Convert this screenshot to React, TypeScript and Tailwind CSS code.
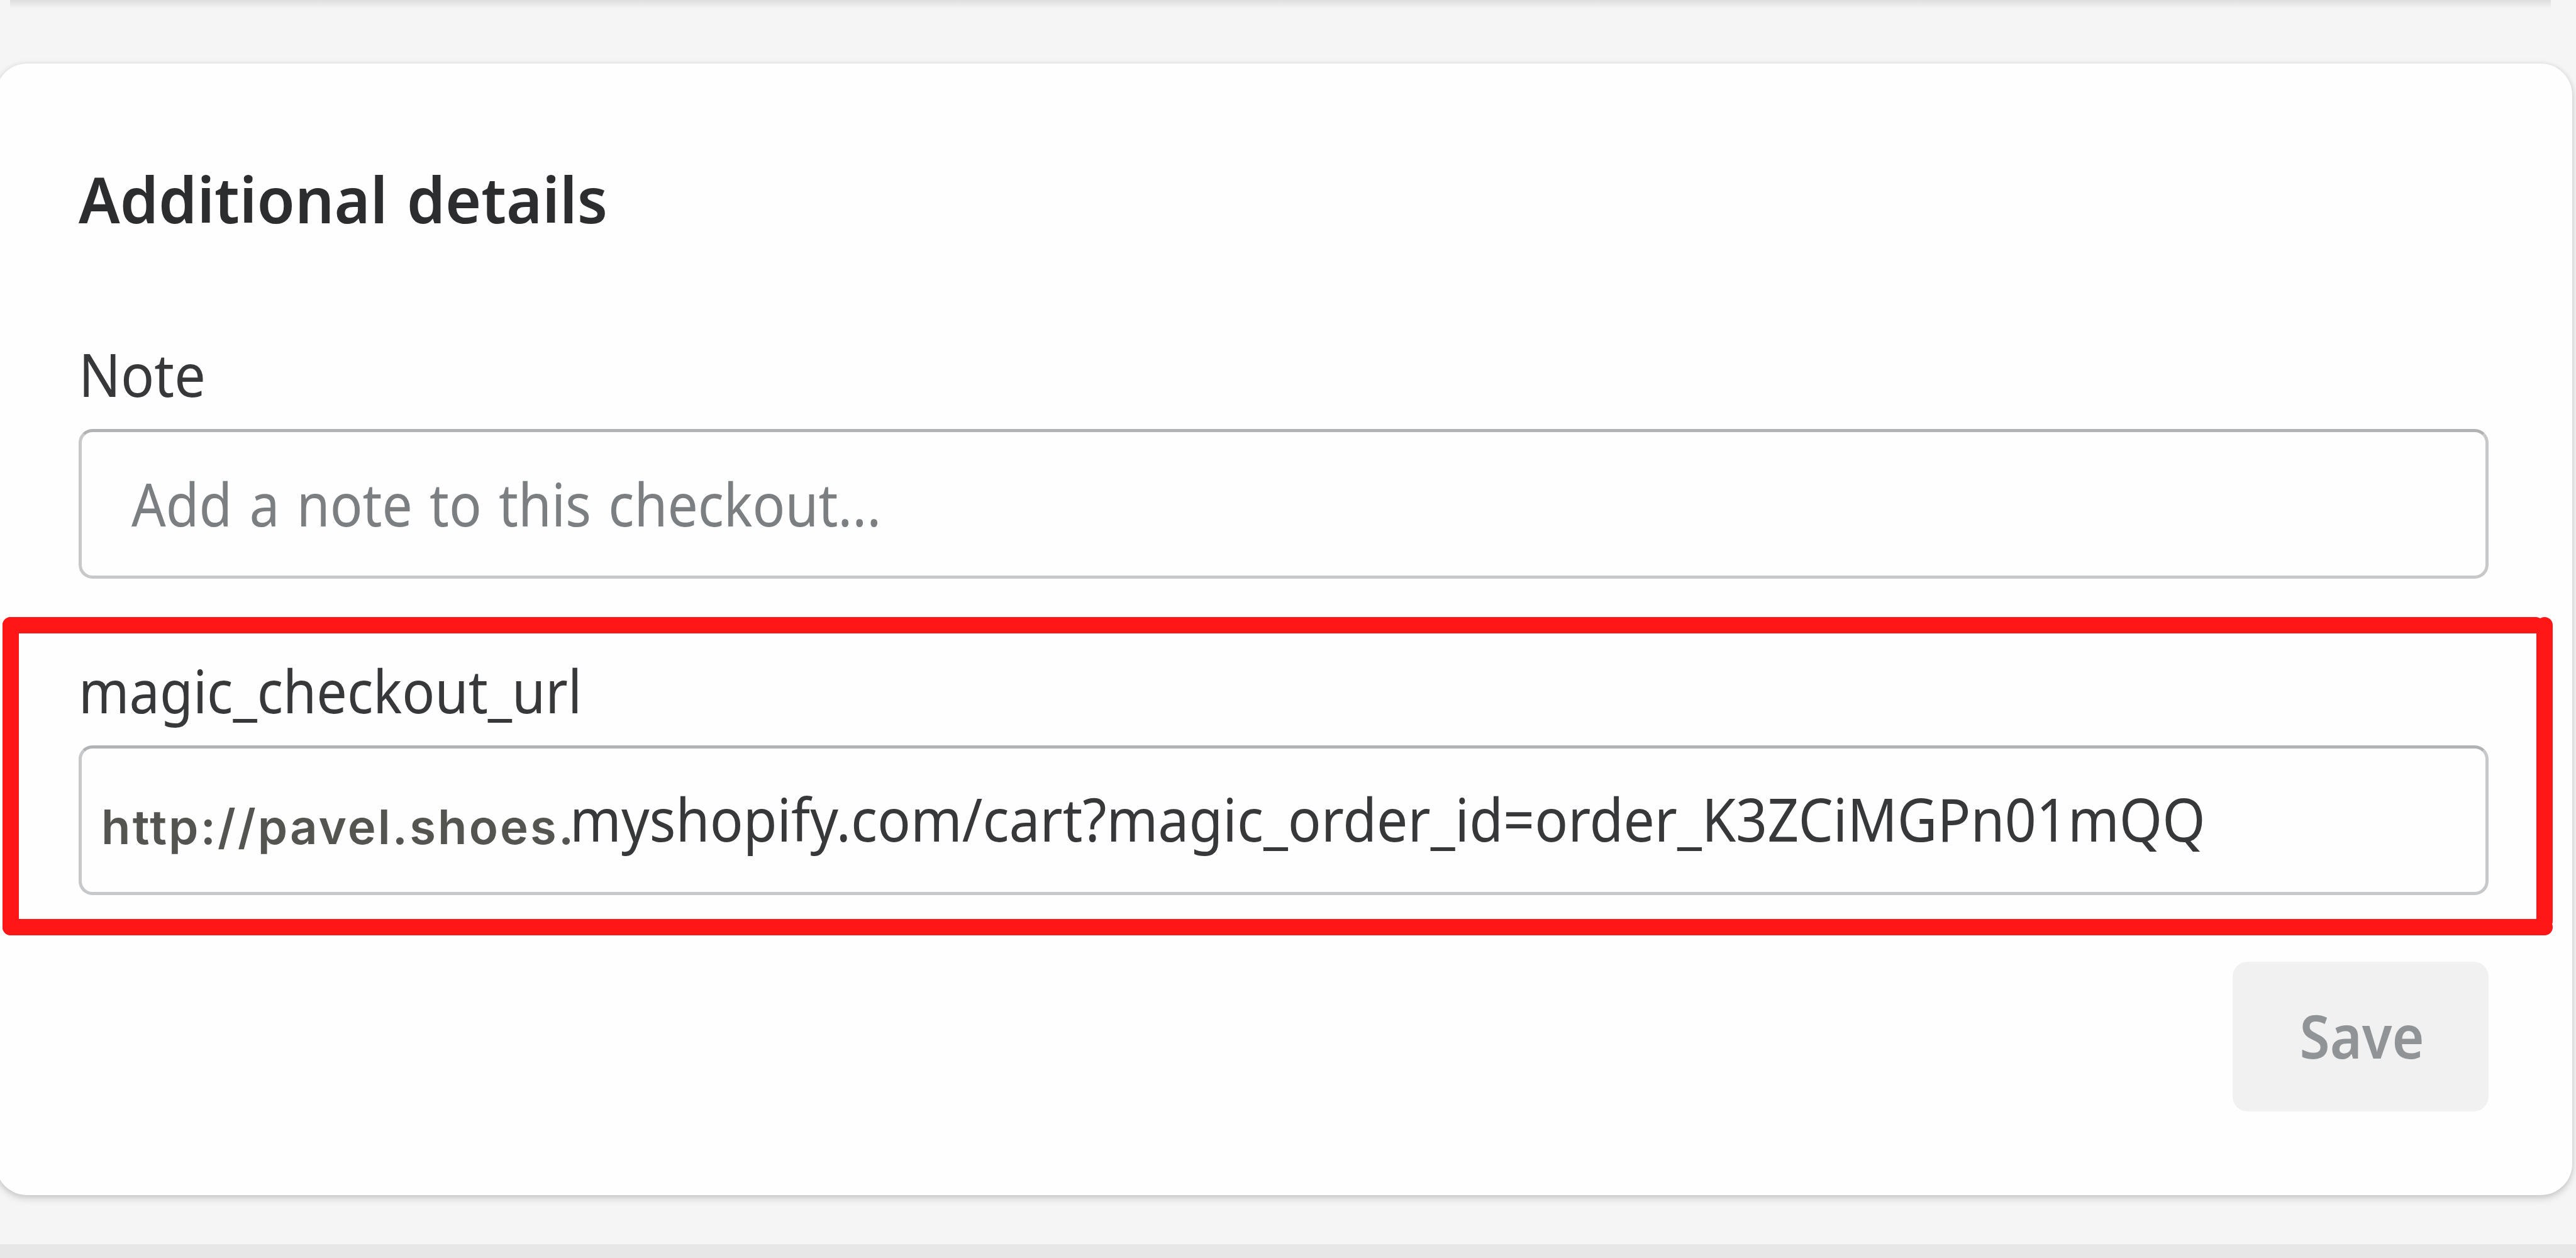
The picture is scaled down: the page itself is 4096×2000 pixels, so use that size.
import { ReactNode } from 'react'

interface FieldProps {
  label: string
  labelClass: string
  children: ReactNode
}

const Field = ({ label, labelClass, children }: FieldProps) => (
  <div className="w-[3832px]">
    <label className="block h-[112px] text-[95px] leading-[112px] text-[#36383a]">
      <span className={`inline-block origin-left whitespace-nowrap ${labelClass}`}>{label}</span>
    </label>
    <div className="mt-[32px] flex h-[238px] items-center rounded-[22px] border-[5px] border-[#c6c8ca] border-t-[#b0b2b4] bg-[#fefefe]">
      {children}
    </div>
  </div>
)

// Four round-capped strokes that outline the checkout url field
const Highlight = () => (
  <div className="pointer-events-none absolute top-[981px] left-[4px] h-[506px] w-[4055px]">
    <div className="absolute top-0 left-0 h-[26px] w-[4041px] rounded-full bg-[#ff1616]" />
    <div className="absolute top-0 left-0 h-full w-[26px] rounded-full bg-[#ff1616]" />
    <div className="absolute top-0 right-0 h-[496px] w-[26px] rounded-full bg-[#ff1616]" />
    <div className="absolute bottom-0 left-0 h-[26px] w-full rounded-full bg-[#ff1616]" />
  </div>
)

export default function App() {
  return (
    <div className="relative flex h-[2000px] w-[4096px] flex-col overflow-hidden bg-[#f5f5f5] font-['Noto_Sans',sans-serif]">
      {/* Shadow of the card above */}
      <div className="ml-[16px] h-[14px] w-[4040px] shrink-0 bg-linear-to-b from-[#dedede] to-[#f5f5f5]" />

      <main className="mt-[87px] -ml-[7px] h-[1799px] w-[4097px] shrink-0 rounded-[50px] bg-[#fefefe] pt-[155px] pl-[132px] shadow-[0_0_8px_rgba(0,0,0,0.1),0_6px_12px_rgba(0,0,0,0.14)]">
        <h2 className="h-[120px] text-[102px] leading-[120px] font-semibold text-[#2b2d2f]">
          <span className="inline-block origin-left scale-x-[0.96] whitespace-nowrap [word-spacing:5px]">
            Additional details
          </span>
        </h2>

        <div className="mt-[162px]">
          <Field label="Note" labelClass="scale-x-[0.928]">
            <span className="mb-[2px] ml-[79px] origin-left scale-x-[0.902] text-[95px] whitespace-nowrap text-[#7c7f82] [word-spacing:5.5px]">
              Add a note to this checkout...
            </span>
          </Field>
        </div>

        <div className="mt-[121px]">
          <Field label="magic_checkout_url" labelClass="scale-x-[0.907]">
            <span className="mt-[20px] w-[743px] shrink-0 pl-[31px] font-['Inter'] text-[76px] font-semibold tracking-[3.1px] whitespace-nowrap text-[#545551]">
              http://pavel.shoes.
            </span>
            <span className="mb-[6px] ml-[33px] origin-left scale-x-[0.922] text-[95px] whitespace-nowrap text-[#36383a]">
              myshopify.com/cart?magic_order_id=order_K3ZCiMGPn01mQQ
            </span>
          </Field>
        </div>

        <div className="mt-[106px] flex w-[3832px] justify-end">
          <button className="flex h-[238px] w-[407px] items-center justify-center rounded-[24px] bg-[#f1f1f1] text-[95px] font-semibold text-[#919497]">
            <span className="mb-[4px] ml-[4px] inline-block scale-x-[0.92]">Save</span>
          </button>
        </div>
      </main>

      <div className="mt-[78px] h-[22px] shrink-0 bg-[#e7e7e7]" />

      <Highlight />
    </div>
  )
}
